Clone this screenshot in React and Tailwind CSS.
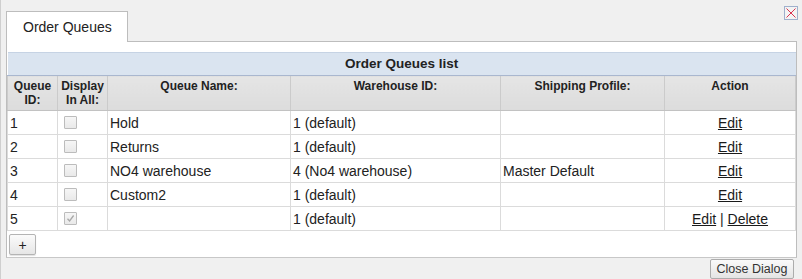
import React from 'react';

const rows = [
  { id: 1, all: false, name: 'Hold', warehouse: '1 (default)', profile: '' },
  { id: 2, all: false, name: 'Returns', warehouse: '1 (default)', profile: '' },
  { id: 3, all: false, name: 'NO4 warehouse', warehouse: '4 (No4 warehouse)', profile: 'Master Default' },
  { id: 4, all: false, name: 'Custom2', warehouse: '1 (default)', profile: '' },
  { id: 5, all: true, name: '', warehouse: '1 (default)', profile: '', canDelete: true },
];

const Checkbox = ({ checked }) => (
  <div className="ml-[4px] w-[13px] h-[13px] border border-[#bcbcbc] rounded-[1px] bg-linear-to-b from-[#f6f6f6] to-[#e9e9e9] flex items-center justify-center">
    {checked && (
      <svg width="9" height="9" viewBox="0 0 9 9">
        <path d="M1.5 4.8 L3.6 7 L7.6 1.5" fill="none" stroke="#a8a8a8" strokeWidth="1.3" />
      </svg>
    )}
  </div>
);

const headers = ['Queue ID:', 'Display In All:', 'Queue Name:', 'Warehouse ID:', 'Shipping Profile:', 'Action'];

export default function App() {
  return (
    <div className="relative w-[802px] h-[279px] bg-[#f0f0f0] border-l border-[#cfcfcf] pl-[5px] pt-[11px] font-['Liberation_Sans',Arial,sans-serif] text-[#222] overflow-hidden">
      {/* close icon */}
      <button className="absolute left-[783px] top-[6px] w-[14px] h-[14px] border border-[#9fb0cc] bg-[#f3f3f3] flex items-center justify-center">
        <svg width="10" height="10" viewBox="0 0 10 10">
          <path d="M0.5 0.5 L9.5 9.5 M9.5 0.5 L0.5 9.5" stroke="#d9334f" strokeWidth="1" />
        </svg>
      </button>

      <div className="w-[791px]">
        <div className="flex">
          <div className="relative z-10 -mb-px w-[122px] h-[31px] bg-white border border-b-0 border-[#bdbdbd] flex items-center pl-[16px] text-[14px] leading-[16px]">
            Order Queues
          </div>
        </div>
        <div className="bg-white border border-[#bdbdbd] border-b-[#c8c8c8] pt-[10px]">
          <table className="w-[788px] table-fixed border-collapse text-[14px] leading-[16px]">
            <colgroup>
              <col className="w-[50px]" />
              <col className="w-[50px]" />
              <col className="w-[183px]" />
              <col className="w-[210px]" />
              <col className="w-[164px]" />
              <col className="w-[131px]" />
            </colgroup>
            <thead>
              <tr>
                <th colSpan={6} className="h-[23px] bg-[#dae4f0] border-t border-t-[#c6d3e4] border-b border-b-[#a9b7cf] text-[13.5px] font-bold text-center align-middle">
                  Order Queues list
                </th>
              </tr>
              <tr>
                {headers.map((h) => (
                  <th
                    key={h}
                    className="h-[35px] align-top pt-[3px] px-[2px] text-[12px] leading-[14px] font-bold text-center bg-linear-to-b from-[#e5e5e5] to-[#dcdcdc] border border-[#cbcbcb] border-b-[#c2c2c2]"
                  >
                    {h}
                  </th>
                ))}
              </tr>
            </thead>
            <tbody>
              {rows.map((r) => (
                <tr key={r.id} className="h-[24px]">
                  <td className="border border-[#dbdbdb] pl-[2px]">{r.id}</td>
                  <td className="border border-[#dbdbdb] pl-[2px]">
                    <Checkbox checked={r.all} />
                  </td>
                  <td className="border border-[#dbdbdb] pl-[2px]">{r.name}</td>
                  <td className="border border-[#dbdbdb] pl-[2px]">{r.warehouse}</td>
                  <td className="border border-[#dbdbdb] pl-[2px]">{r.profile}</td>
                  <td className="border border-[#dbdbdb] text-center">
                    <a className="underline text-[#1a1a1a] cursor-pointer">Edit</a>
                    {r.canDelete && (
                      <>
                        {' | '}
                        <a className="underline text-[#1a1a1a] cursor-pointer">Delete</a>
                      </>
                    )}
                  </td>
                </tr>
              ))}
            </tbody>
          </table>
          <div className="pt-[3px] pb-[2px] pl-[2px]">
            <button className="w-[27px] h-[21px] border border-[#b4b4b4] rounded-[2px] bg-linear-to-b from-[#fbfbfb] to-[#e6e6e6] shadow-[0_1px_1px_rgba(0,0,0,0.12)] text-[14px] leading-[14px] text-[#222] flex items-center justify-center">
              +
            </button>
          </div>
        </div>
      </div>

      <div className="flex justify-end pr-[8px] pt-[1px]">
        <button className="w-[84px] h-[20px] border border-[#acacac] rounded-[2px] bg-linear-to-b from-[#fafafa] to-[#e4e4e4] text-[12.5px] leading-[14px] text-[#333] flex items-center justify-center">
          Close Dialog
        </button>
      </div>
    </div>
  );
}
